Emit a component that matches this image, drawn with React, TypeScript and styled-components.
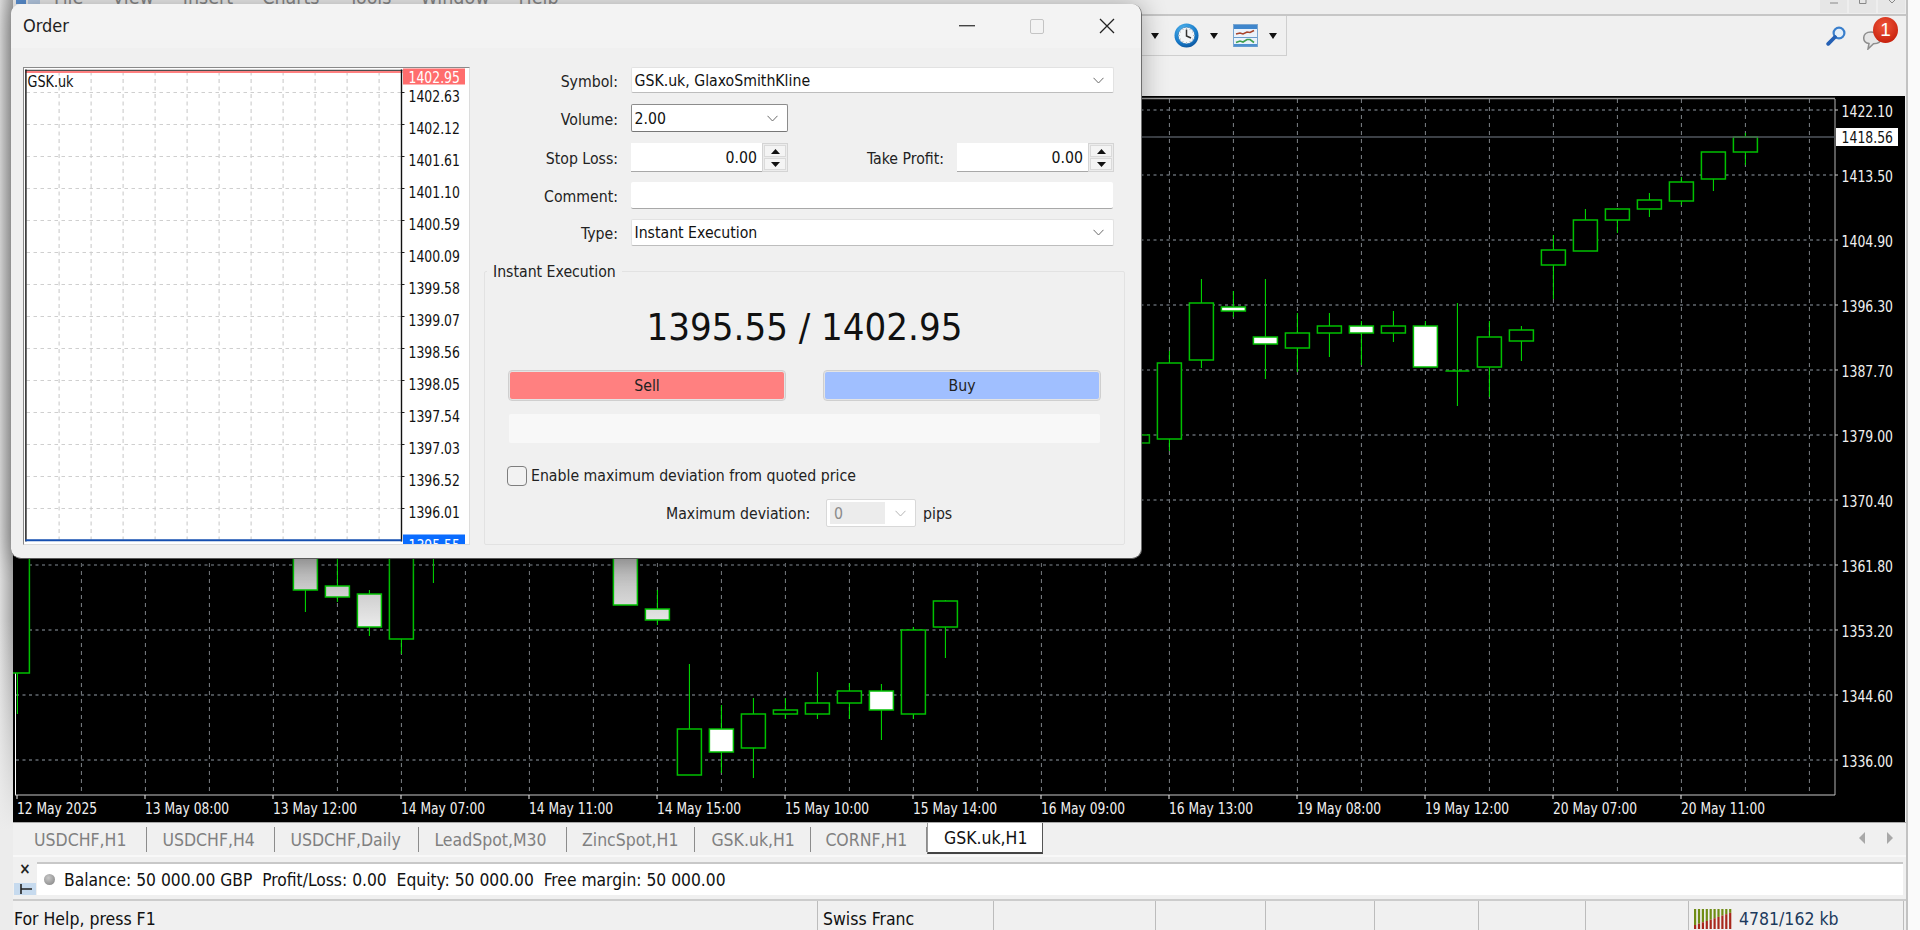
import React from "react";
import styled, { createGlobalStyle } from "styled-components";

const FONT = '"DejaVu Sans Condensed","DejaVu Sans","Liberation Sans",sans-serif';

const Global = createGlobalStyle`
  html, body { margin: 0; padding: 0; background: #f0f0f0; overflow: hidden; }
  body { font-family: ${FONT}; font-size: 15.7px; color: #111; }
  * { box-sizing: border-box; }
`;

const Shell = styled.div`
  position: relative;
  display: flex;
  width: 1920px;
  height: 930px;
  overflow: hidden;
`;
const LeftGutter = styled.div`
  width: 13px;
  flex: none;
  background: linear-gradient(180deg, transparent 620px, #ececec 830px), linear-gradient(to right, #dcdcdc, #a4a4a4);
`;
const RightGutter = styled.div`
  flex: 1;
  background: #fafafa;
  border-left: 2px solid #c2c2c2;
`;
const Main = styled.div`
  width: 1893px;
  flex: none;
  display: flex;
  flex-direction: column;
  background: #f0f0f0;
`;
const TopBar = styled.div`
  height: 16px;
  display: flex;
  overflow: hidden;
  background: #eeeeee;
  border-bottom: 2px solid #c6c6c6;
`;
const AppIcon = styled.svg`
  flex: none;
  margin-left: 3px;
`;
const Menu = styled.div`
  display: flex;
  gap: 29px;
  padding-left: 13px;
  margin-top: -10px;
  font-size: 19.5px;
  color: #8a8a8a;
  line-height: 16px;
`;
const WinButtons = styled.div`
  display: flex;
  gap: 2px;
  margin-left: auto;
  padding-right: 1px;
`;
const WinButton = styled.div`
  width: 27px;
  height: 13px;
  background: #e6e6e6;
  display: flex;
  justify-content: center;
`;
const ToolArea = styled.div`
  height: 80px;
  display: flex;
  align-items: flex-start;
  background: #f0f0f0;
`;
const Toolbar = styled.div`
  width: 1274px;
  height: 40px;
  display: flex;
  justify-content: flex-end;
  align-items: center;
  gap: 15px;
  padding-right: 9px;
  border-right: 1px solid #cfcfcf;
  border-bottom: 1px solid #cfcfcf;
`;
const ToolGroup = styled.div`
  display: flex;
  align-items: center;
  gap: 11px;
`;
const DropArrow = styled.span`
  width: 0;
  height: 0;
  border-left: 4.5px solid transparent;
  border-right: 4.5px solid transparent;
  border-top: 6px solid #111;
`;
const RightTools = styled.div`
  margin-left: auto;
  display: flex;
  gap: 17px;
  padding: 1px 8px 0 0;
`;
const SearchWrap = styled.div`
  margin-top: 9px;
  height: 20px;
`;
const Notif = styled.div`
  position: relative;
  width: 35px;
  height: 33px;
`;
const Badge = styled.div`
  position: absolute;
  right: 0;
  top: 0;
  width: 25px;
  height: 26px;
  border-radius: 50%;
  background: radial-gradient(circle at 45% 35%, #f0563a, #c9230f 75%);
  color: #fff;
  font-size: 19px;
  line-height: 26px;
  text-align: center;
  font-family: "Liberation Sans", sans-serif;
`;
const ChartRow = styled.div`
  height: 726px;
  display: flex;
`;
const ChartSvg = styled.svg`
  display: block;
  flex: none;
  font-family: ${FONT};
`;
const TabsRow = styled.div`
  height: 33px;
  display: flex;
  align-items: flex-start;
  border-top: 1px solid #a8a8a8;
  background: #f0f0f0;
`;
const Tab = styled.div<{ $w: number; $pad: number }>`
  width: ${(p) => p.$w}px;
  height: 25px;
  margin-top: 4px;
  flex: none;
  display: flex;
  align-items: center;
  padding-left: ${(p) => p.$pad}px;
  white-space: nowrap;
  color: #808080;
  border-right: 1px solid #8c8c8c;
  font-size: 17.5px;
`;
const ActiveTab = styled.div`
  width: 116px;
  height: 31px;
  flex: none;
  display: flex;
  align-items: center;
  padding-left: 16px;
  white-space: nowrap;
  background: #fff;
  color: #111;
  border-left: 1px solid #9a9a9a;
  border-right: 1px solid #555;
  border-bottom: 2px solid #444;
  font-size: 17.5px;
`;
const TabArrows = styled.div`
  margin-left: auto;
  display: flex;
  gap: 22px;
  padding: 9px 13px 0 0;
`;
const Ticker = styled.div`
  height: 46px;
  display: flex;
  padding-top: 5px;
  background: #f0f0f0;
  border-bottom: 2px solid #cccccc;
  border-top: 2px solid #f8f8f8;
`;
const TickerTools = styled.div`
  width: 24px;
  flex: none;
  display: flex;
  flex-direction: column;
  align-items: center;
  justify-content: space-between;
  height: 33px;
`;
const CloseMark = styled.div`
  font-size: 15px;
  line-height: 14px;
  font-weight: 700;
  color: #222;
`;
const PinMark = styled.div`
  width: 22px;
  height: 12px;
  background: #c6daee;
  display: flex;
  align-items: center;
  justify-content: center;
`;
const TickerBox = styled.div`
  width: 1866px;
  height: 33px;
  flex: none;
  display: flex;
  align-items: center;
  gap: 9px;
  padding-left: 7px;
  background: #fff;
  border-top: 2px solid #c8c8c8;
`;
const Dot = styled.span`
  width: 11px;
  height: 11px;
  border-radius: 50%;
  background: radial-gradient(circle at 40% 35%, #c8c8c8, #808080);
  flex: none;
`;
const TickerText = styled.span`
  white-space: pre;
  font-size: 17.3px;
  color: #111;
`;
const Status = styled.div`
  height: 29px;
  display: flex;
  font-size: 17.5px;
  background: #f0f0f0;
`;
const StatusCell = styled.div<{ $w: number; $pad?: number }>`
  width: ${(p) => p.$w}px;
  flex: none;
  display: flex;
  align-items: center;
  gap: 7px;
  padding-left: ${(p) => p.$pad ?? 5}px;
  padding-top: 7px;
  border-right: 1px solid #bcbcbc;
  white-space: nowrap;
`;
const Meter = styled.span`
  color: #1c3a5c;
  font-size: 17.5px;
`;

/* Order dialog */
const Dialog = styled.div`
  position: absolute;
  left: 11px;
  top: 4px;
  width: 1131px;
  height: 555px;
  display: flex;
  flex-direction: column;
  background: #f0f0f0;
  border-radius: 10px;
  border-right: 1px solid #6e6e6e;
  border-bottom: 1px solid #5a5a5a;
  box-shadow: 0 0 26px rgba(0, 0, 0, 0.32);
  overflow: hidden;
`;
const TitleBar = styled.div`
  height: 44px;
  flex: none;
  display: flex;
  align-items: center;
  justify-content: space-between;
  padding: 0 26px 0 12px;
  background: #f3f3f3;
  font-size: 18px;
  color: #222;
`;
const TitleText = styled.span`
  margin-top: -2px;
`;
const TitleControls = styled.div`
  display: flex;
  align-items: center;
  gap: 55px;
`;
const DialogBody = styled.div`
  flex: 1;
  display: flex;
  gap: 14px;
  padding: 19px 15px 0 12px;
`;
const MiniFrame = styled.div`
  width: 447px;
  height: 478px;
  flex: none;
  background: #fff;
  border-top: 1.5px solid #8a8a8a;
  border-left: 1.5px solid #8a8a8a;
  border-right: 1px solid #dcdcdc;
  border-bottom: 1px solid #dcdcdc;
`;
const MiniSvg = styled.svg`
  display: block;
  font-family: ${FONT};
`;
const Form = styled.div`
  width: 641px;
  flex: none;
  display: flex;
  flex-direction: column;
`;
const Row = styled.div<{ $h: number; $gap: number }>`
  height: ${(p) => p.$h}px;
  margin-top: ${(p) => p.$gap}px;
  display: flex;
  align-items: center;
  padding-right: 11.5px;
`;
const Label = styled.label<{ $w?: number }>`
  width: ${(p) => p.$w ?? 134}px;
  flex: none;
  text-align: right;
  margin-right: 12.5px;
  padding-top: 2px;
  color: #222;
`;
const Select = styled.div<{ $focus?: boolean; $w?: number }>`
  ${(p) => (p.$w ? `width:${p.$w}px;flex:none;` : "flex:1;")}
  height: 100%;
  display: flex;
  align-items: center;
  justify-content: space-between;
  padding: 0 9px 0 3px;
  background: #fff;
  border: 1px solid ${(p) => (p.$focus ? "#8c8c8c" : "#e2e2e2")};
  border-bottom: 1px solid ${(p) => (p.$focus ? "#777" : "#bdbdbd")};
  border-radius: 2px;
  color: #111;
`;
const Spinner = styled.div`
  width: 157.5px;
  height: 100%;
  flex: none;
  display: flex;
`;
const SpinInput = styled.div`
  flex: 1;
  display: flex;
  align-items: center;
  justify-content: flex-end;
  padding-right: 5px;
  background: #fff;
  border-bottom: 1px solid #a8a8a8;
`;
const SpinButtons = styled.div`
  width: 26px;
  flex: none;
  display: flex;
  flex-direction: column;
  gap: 1px;
  padding: 1px;
  border: 1px solid #d4d4d4;
  background: #ececec;
`;
const SpinButton = styled.div`
  flex: 1;
  display: flex;
  align-items: center;
  justify-content: center;
  background: #f4f4f4;
  border: 1px solid #dadada;
`;
const TextField = styled.div`
  flex: 1;
  height: 100%;
  margin-right: 1px;
  background: #fff;
  border-bottom: 1px solid #a8a8a8;
  border-radius: 2px;
`;
const Group = styled.div`
  position: relative;
  margin-top: 25px;
  height: 274px;
  display: flex;
  flex-direction: column;
  padding: 26px 24px 0 24px;
  border: 1px solid #e2e2e2;
  border-radius: 2px;
`;
const Legend = styled.span`
  position: absolute;
  left: 2px;
  top: -9px;
  padding: 0 6px;
  background: #f0f0f0;
  line-height: 18px;
  color: #222;
`;
const Price = styled.div`
  height: 57px;
  display: flex;
  align-items: center;
  justify-content: center;
  font-size: 38px;
  color: #111;
`;
const TradeRow = styled.div`
  margin-top: 16px;
  height: 29px;
  display: grid;
  grid-template-columns: 276px 276px;
  justify-content: space-between;
`;
const TradeButton = styled.div<{ $bg: string }>`
  display: flex;
  align-items: center;
  justify-content: center;
  background: ${(p) => p.$bg};
  border: 1px solid #e4e4e4;
  outline: 1px solid #cfcfcf;
  border-radius: 3px;
  color: #222;
`;
const InfoBar = styled.div`
  margin-top: 14px;
  height: 29px;
  background: #f8f8f8;
  border-radius: 2px;
`;
const CheckRow = styled.div`
  margin-top: 22px;
  margin-left: -2px;
  height: 21px;
  display: flex;
  align-items: center;
  gap: 4px;
  color: #222;
`;
const CheckBox = styled.span`
  width: 20px;
  height: 20px;
  flex: none;
  border: 1.5px solid #7e7e7e;
  border-radius: 4px;
  background: #f2f2f2;
`;
const DevRow = styled.div`
  margin-top: 13px;
  height: 28px;
  display: flex;
  align-items: center;
  padding-left: 157px;
  color: #222;
`;
const DevLabel = styled.span`
  width: 142px;
  flex: none;
  margin-right: 18px;
  white-space: nowrap;
`;
const DevSelect = styled.div`
  width: 90px;
  height: 100%;
  flex: none;
  display: flex;
  align-items: center;
  margin-right: 7px;
  padding: 2px 9px 2px 3px;
  gap: 10px;
  background: #fff;
  border: 1px solid #d8d8d8;
  border-radius: 2px;
`;
const DevValue = styled.span`
  flex: 1;
  height: 100%;
  display: flex;
  align-items: center;
  padding-left: 4px;
  background: #ececec;
  color: #8a8a8a;
`;

/* data */
const TICKS_PRICE = ["1422.10","1413.50","1404.90","1396.30","1387.70","1379.00","1370.40","1361.80","1353.20","1344.60","1336.00"];
const TIME_LABELS = ["12 May 2025","13 May 08:00","13 May 12:00","14 May 07:00","14 May 11:00","14 May 15:00","15 May 10:00","15 May 14:00","16 May 09:00","16 May 13:00","19 May 08:00","19 May 12:00","20 May 07:00","20 May 11:00"];
const MINI_LABELS = ["1402.63","1402.12","1401.61","1401.10","1400.59","1400.09","1399.58","1399.07","1398.56","1398.05","1397.54","1397.03","1396.52","1396.01"];

type Candle = [number, number, number, number, number, "b" | "w" | "g"];
const C: Candle[] = [
  [17.4, 540, 714, 500, 673, "b"],
  [305.4, 540, 612, 540, 590, "g"],
  [337.4, 540, 602, 586, 597, "g"],
  [369.4, 590, 636, 594, 627, "g"],
  [401.4, 540, 654, 540, 639, "b"],
  [433.4, 540, 583, 500, 500, "b"],
  [625.4, 540, 605, 540, 605, "g"],
  [657.4, 590, 625, 609, 620, "g"],
  [689.4, 664, 775, 729, 775, "b"],
  [721.4, 705, 773, 729, 752, "w"],
  [753.4, 698, 778, 714, 748, "b"],
  [785.4, 698, 719, 710, 714, "b"],
  [817.4, 672, 719, 703, 714, "b"],
  [849.4, 683, 719, 691, 703, "b"],
  [881.4, 684, 740, 691, 710, "w"],
  [913.4, 627, 719, 630, 714, "b"],
  [945.4, 600, 658, 601, 627, "b"],
  [1137.4, 420, 450, 435, 443, "b"],
  [1169.4, 351, 451, 363, 439, "b"],
  [1201.4, 279, 368, 303, 360, "b"],
  [1233.4, 291, 317, 307, 311, "w"],
  [1265.4, 279, 379, 337, 344, "w"],
  [1297.4, 313, 372, 333, 348, "b"],
  [1329.4, 313, 357, 326, 333, "b"],
  [1361.4, 321, 365, 326, 333, "w"],
  [1393.4, 311, 342, 326, 333, "b"],
  [1425.4, 321, 367, 326, 367, "w"],
  [1457.4, 303, 406, 371, 371, "b"],
  [1489.4, 321, 397, 337, 367, "b"],
  [1521.4, 326, 361, 330, 341, "b"],
  [1553.4, 235, 299, 250, 265, "b"],
  [1585.4, 209, 251, 220, 251, "b"],
  [1617.4, 208, 233, 209, 220, "b"],
  [1649.4, 193, 217, 200, 209, "b"],
  [1681.4, 177, 205, 182, 201, "b"],
  [1713.4, 152, 191, 152, 179, "b"],
  [1745.4, 133, 165, 137, 152, "b"],
];

const range = (n: number) => Array.from({ length: n }, (_, i) => i);

const Chevron = ({ color = "#6a6a6a" }: { color?: string }) => (
  <svg width="11" height="7" viewBox="0 0 11 7"><path d="M0.5 0.8 L5.5 6 L10.5 0.8" fill="none" stroke={color} strokeWidth="1" /></svg>
);
const Tri = ({ up }: { up?: boolean }) => (
  <svg width="9" height="5" viewBox="0 0 9 5"><path d={up ? "M4.5 0 L9 5 L0 5Z" : "M0 0 L9 0 L4.5 5Z"} fill="#111" /></svg>
);

const ClockIcon = () => (
  <svg width="25" height="25" viewBox="0 0 25 25">
    <defs>
      <radialGradient id="clockRing" cx="40%" cy="30%" r="75%">
        <stop offset="0%" stopColor="#5cc0f4" /><stop offset="70%" stopColor="#1578c8" /><stop offset="100%" stopColor="#0b4f96" />
      </radialGradient>
    </defs>
    <circle cx="12.5" cy="12.5" r="12" fill="url(#clockRing)" />
    <circle cx="12.5" cy="12.5" r="8.4" fill="#f2f5f8" stroke="#0e5fa8" strokeWidth="0.6" />
    <path d="M12.5 6.5 V13 L17 15" fill="none" stroke="#333" strokeWidth="1.5" />
    {range(12).map((i) => {
      const a = (i * Math.PI) / 6;
      return <circle key={i} cx={12.5 + 7 * Math.sin(a)} cy={12.5 - 7 * Math.cos(a)} r="0.45" fill="#777" />;
    })}
  </svg>
);
const ChartIcon = () => (
  <svg width="25" height="23" viewBox="0 0 25 23">
    <rect x="0.5" y="0.5" width="24" height="22" fill="#eaf2fb" stroke="#7aa6d0" />
    <rect x="1" y="1" width="23" height="4" fill="#3f86cc" />
    <rect x="1" y="13" width="23" height="1" fill="#6b9ccc" />
    <rect x="1" y="20" width="23" height="2.5" fill="#4f90d0" />
    <path d="M3 10 L7 9 L10 10 L14 8 L17 8.5 L21 6.5" fill="none" stroke="#a8452c" strokeWidth="1.6" />
    <path d="M3 18.5 L7 17 L10 18 L14 15.5 L17 15.5 L21 18.5" fill="none" stroke="#3f9f50" strokeWidth="1.6" />
  </svg>
);
const SearchIcon = () => (
  <svg width="20" height="20" viewBox="0 0 20 20">
    <circle cx="13" cy="7" r="5.4" fill="#e4eff9" stroke="#3a7fcc" strokeWidth="2.2" />
    <path d="M9 11 L2.2 17.8" stroke="#2560b4" strokeWidth="3.8" strokeLinecap="round" />
  </svg>
);
const BubbleIcon = () => (
  <svg width="24" height="19" viewBox="0 0 24 19" style={{ position: "absolute", left: 0, top: 14 }}>
    <path d="M8 1 C3 1 0.7 4 0.7 7 C0.7 10 3 12 6 12.5 L5 18 L10.5 12.7 C16 12.7 18 10 18 7 C18 4 14 1 8 1Z" fill="#e6e6e6" stroke="#8e8e8e" strokeWidth="1.5" />
  </svg>
);
const MeterIcon = () => (
  <svg width="38" height="20" viewBox="0 0 38 20">
    {range(10).map((i) => {
      const red = 4 + i * 1.35;
      return (
        <g key={i}>
          <rect x={i * 3.9} y={0} width="2.2" height={20 - red} fill="#6f8c14" />
          <rect x={i * 3.9} y={20 - red} width="2.2" height={red} fill="#a8281c" />
        </g>
      );
    })}
  </svg>
);

const CandleMark = ({ c }: { c: Candle }) => {
  const [x, wt, wb, bt, bb, kind] = c;
  const fill = kind === "b" ? "#000" : kind === "w" ? "#fff" : "url(#bearFade)";
  return (
    <g>
      <line x1={x} x2={x} y1={wt} y2={wb} stroke="#00e800" strokeWidth="1" />
      {bb > bt ? (
        <rect x={x - 12} y={bt} width={24} height={bb - bt} fill={fill} stroke="#00c000" strokeWidth="1.5" />
      ) : (
        <line x1={x - 12} x2={x + 12} y1={bt} y2={bt} stroke="#00c000" strokeWidth="1.5" />
      )}
    </g>
  );
};

const MainChart = () => (
  <ChartSvg width={1892} height={726} viewBox="13 96 1892 726">
    <defs>
      <linearGradient id="bearFade" gradientUnits="userSpaceOnUse" x1="0" x2="0" y1="556" y2="650">
        <stop offset="0%" stopColor="#aeaeae" /><stop offset="100%" stopColor="#ffffff" />
      </linearGradient>
    </defs>
    <rect x="13" y="96" width="1892" height="726" fill="#000" />
    <line x1="13" x2="1835" y1="98.5" y2="98.5" stroke="#9a9a9a" strokeWidth="1.5" />
    <line x1="15.5" x2="15.5" y1="96" y2="795" stroke="#ffffff" />
    <line x1="1835" x2="1835" y1="99" y2="795" stroke="#b4b4b4" />
    <line x1="15" x2="1835" y1="795" y2="795" stroke="#c8c8c8" />
    {range(28).map((i) => (
      <line key={i} x1={17.4 + 64 * i + 64} x2={17.4 + 64 * i + 64} y1="99" y2="795" stroke="#8d9299" strokeDasharray="4 4" strokeWidth="0.9" />
    ))}
    {range(11).map((i) => (
      <line key={i} x1="16" x2="1835" y1={110 + 65 * i} y2={110 + 65 * i} stroke="#62686f" strokeDasharray="3 3.5" strokeWidth="1.3" />
    ))}
    {C.map((c) => <CandleMark key={c[0]} c={c} />)}
    <line x1="13" x2="1835" y1="137" y2="137" stroke="#50565e" strokeWidth="1.5" />
    {TICKS_PRICE.map((t, i) => (
      <g key={t}>
        <line x1="1835" x2="1838" y1={110 + 65 * i} y2={110 + 65 * i} stroke="#ccc" />
        <text x="1841.6" y={117 + 65 * i} fill="#f0f0f0" fontSize="16" textLength="51.4" lengthAdjust="spacingAndGlyphs">{t}</text>
      </g>
    ))}
    <rect x="1836" y="128" width="62" height="18" fill="#fff" />
    <text x="1841.6" y="143" fill="#111" fontSize="16" textLength="51.4" lengthAdjust="spacingAndGlyphs">1418.56</text>
    {TIME_LABELS.map((t, i) => (
      <g key={t}>
        <line x1={17 + 128 * i} x2={17 + 128 * i} y1="795" y2="799" stroke="#eee" />
        <text x={17 + 128 * i} y="813.5" fill="#f0f0f0" fontSize="16" textLength={i === 0 ? 80 : 84} lengthAdjust="spacingAndGlyphs">{t}</text>
      </g>
    ))}
  </ChartSvg>
);

const MiniChart = () => (
  <MiniFrame>
    <MiniSvg width={444.5} height={475.5} viewBox="24.5 68.5 444.5 475.5">
      {range(11).map((i) => (
        <line key={i} x1={59.6 + 32 * i} x2={59.6 + 32 * i} y1="72" y2="540" stroke="#c6c6c6" strokeDasharray="4 3.5" />
      ))}
      {range(14).map((i) => (
        <g key={i}>
          <line x1="27" x2="402" y1={93 + 32 * i} y2={93 + 32 * i} stroke="#cfcfcf" strokeDasharray="3.5 3.5" />
          <line x1="402" x2="405" y1={93 + 32 * i} y2={93 + 32 * i} stroke="#222" />
          <text x="409" y={102.5 + 32 * i} fontSize="16" fill="#111" textLength="51.4" lengthAdjust="spacingAndGlyphs">{MINI_LABELS[i]}</text>
        </g>
      ))}
      <line x1="26" x2="403" y1="70.8" y2="70.8" stroke="#222" />
      <line x1="26" x2="403" y1="72.6" y2="72.6" stroke="#ff8080" strokeWidth="2" />
      <line x1="26.4" x2="26.4" y1="70" y2="542" stroke="#111" strokeWidth="1.4" />
      <line x1="402" x2="402" y1="70" y2="542" stroke="#111" strokeWidth="1.4" />
      <line x1="26" x2="402" y1="540.8" y2="540.8" stroke="#154fb0" strokeWidth="2" />
      <text x="28" y="87.5" fontSize="15.5" fill="#111" textLength="46" lengthAdjust="spacingAndGlyphs">GSK.uk</text>
      <rect x="403.5" y="69" width="62" height="16" fill="#ff6d6d" />
      <text x="409" y="83" fontSize="16" fill="#fff" textLength="51.4" lengthAdjust="spacingAndGlyphs">1402.95</text>
      <rect x="403.5" y="535" width="62" height="12" fill="#0a6cff" />
      <text x="409" y="551" fontSize="16" fill="#fff" textLength="51.4" lengthAdjust="spacingAndGlyphs">1395.55</text>
    </MiniSvg>
  </MiniFrame>
);

const SpinBox = ({ value }: { value: string }) => (
  <Spinner>
    <SpinInput>{value}</SpinInput>
    <SpinButtons>
      <SpinButton><Tri up /></SpinButton>
      <SpinButton><Tri /></SpinButton>
    </SpinButtons>
  </Spinner>
);

const TABS: [string, number, number][] = [
  ["USDCHF,H1", 134.4, 21],
  ["USDCHF,H4", 128, 15],
  ["USDCHF,Daily", 144, 15],
  ["LeadSpot,M30", 147.6, 15],
  ["ZincSpot,H1", 128.4, 15],
  ["GSK.uk,H1", 116, 16],
  ["CORNF,H1", 115.6, 14],
];
const CELLS: [string, number, number][] = [
  ["For Help, press F1", 805, 1],
  ["Swiss Franc", 176, 5],
  ["", 162, 5],
  ["", 110, 5],
  ["", 109, 5],
  ["", 104, 5],
  ["", 107, 5],
  ["", 103, 5],
];

export default function App() {
  return (
    <Shell>
      <Global />
      <LeftGutter />
      <Main>
        <TopBar>
          <AppIcon width="25" height="14" viewBox="0 0 25 14">
            <rect x="0" y="0" width="10" height="4" fill="#5a8fd0" />
            <rect x="12" y="0" width="12" height="4" fill="#b9cde6" />
          </AppIcon>
          <Menu>
            {["File", "View", "Insert", "Charts", "Tools", "Window", "Help"].map((m) => <span key={m}>{m}</span>)}
          </Menu>
          <WinButtons>
            <WinButton><svg width="10" height="13" viewBox="0 0 10 13"><path d="M1 3 H9" stroke="#888" /></svg></WinButton>
            <WinButton><svg width="10" height="13" viewBox="0 0 10 13"><path d="M1.5 -3 V3.5 H8 V-3" fill="none" stroke="#888" /></svg></WinButton>
            <WinButton><svg width="10" height="13" viewBox="0 0 10 13"><path d="M1 -1 L5 3 L9 -1" fill="none" stroke="#888" /></svg></WinButton>
          </WinButtons>
        </TopBar>
        <ToolArea>
          <Toolbar>
            <ToolGroup><DropArrow /></ToolGroup>
            <ToolGroup><ClockIcon /><DropArrow /></ToolGroup>
            <ToolGroup><ChartIcon /><DropArrow /></ToolGroup>
          </Toolbar>
          <RightTools>
            <SearchWrap><SearchIcon /></SearchWrap>
            <Notif>
              <BubbleIcon />
              <Badge>1</Badge>
            </Notif>
          </RightTools>
        </ToolArea>
        <ChartRow><MainChart /></ChartRow>
        <TabsRow>
          {TABS.map(([t, w, pad]) => <Tab key={t + w} $w={w} $pad={pad}>{t}</Tab>)}
          <ActiveTab>GSK.uk,H1</ActiveTab>
          <TabArrows>
            <svg width="6" height="12" viewBox="0 0 6 12"><path d="M6 0 V12 L0 6Z" fill="#a8a8a8" /></svg>
            <svg width="6" height="12" viewBox="0 0 6 12"><path d="M0 0 V12 L6 6Z" fill="#a8a8a8" /></svg>
          </TabArrows>
        </TabsRow>
        <Ticker>
          <TickerTools>
            <CloseMark>×</CloseMark>
            <PinMark><svg width="13" height="10" viewBox="0 0 13 10"><path d="M2 0 V10 M2 5 H13" stroke="#222" strokeWidth="1.6" /></svg></PinMark>
          </TickerTools>
          <TickerBox>
            <Dot />
            <TickerText>{"Balance: 50 000.00 GBP  Profit/Loss: 0.00  Equity: 50 000.00  Free margin: 50 000.00"}</TickerText>
          </TickerBox>
        </Ticker>
        <Status>
          {CELLS.map(([t, w, pad], i) => <StatusCell key={i} $w={w} $pad={pad}>{t}</StatusCell>)}
          <StatusCell $w={215}><MeterIcon /><Meter>4781/162 kb</Meter></StatusCell>
        </Status>
      </Main>
      <RightGutter />

      <Dialog>
        <TitleBar>
          <TitleText>Order</TitleText>
          <TitleControls>
            <svg width="16" height="2" viewBox="0 0 16 2"><rect width="16" height="1.4" fill="#444" /></svg>
            <svg width="14" height="15" viewBox="0 0 14 15"><rect x="0.5" y="0.5" width="13" height="14" rx="1.5" fill="none" stroke="#c4c4c4" /></svg>
            <svg width="16" height="16" viewBox="0 0 16 16"><path d="M1 1 L15 15 M15 1 L1 15" stroke="#222" strokeWidth="1.3" /></svg>
          </TitleControls>
        </TitleBar>
        <DialogBody>
          <MiniChart />
          <Form>
            <Row $h={26} $gap={0}>
              <Label>Symbol:</Label>
              <Select>GSK.uk, GlaxoSmithKline<Chevron /></Select>
            </Row>
            <Row $h={28} $gap={11}>
              <Label>Volume:</Label>
              <Select $focus $w={157.5}>2.00<Chevron /></Select>
            </Row>
            <Row $h={29} $gap={11}>
              <Label>Stop Loss:</Label>
              <SpinBox value="0.00" />
              <Label $w={156}>Take Profit:</Label>
              <SpinBox value="0.00" />
            </Row>
            <Row $h={27} $gap={10}>
              <Label>Comment:</Label>
              <TextField />
            </Row>
            <Row $h={27} $gap={10}>
              <Label>Type:</Label>
              <Select>Instant Execution<Chevron /></Select>
            </Row>
            <Group>
              <Legend>Instant Execution</Legend>
              <Price>1395.55 / 1402.95</Price>
              <TradeRow>
                <TradeButton $bg="#ff8080">Sell</TradeButton>
                <TradeButton $bg="#a0bfff">Buy</TradeButton>
              </TradeRow>
              <InfoBar />
              <CheckRow><CheckBox />Enable maximum deviation from quoted price</CheckRow>
              <DevRow>
                <DevLabel>Maximum deviation:</DevLabel>
                <DevSelect><DevValue>0</DevValue><Chevron color="#b4b4b4" /></DevSelect>
                pips
              </DevRow>
            </Group>
          </Form>
        </DialogBody>
      </Dialog>
    </Shell>
  );
}
